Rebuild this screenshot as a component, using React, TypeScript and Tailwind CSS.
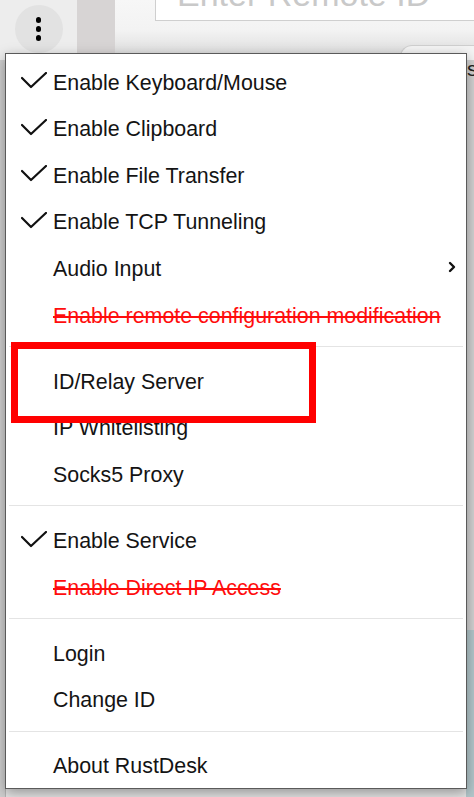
import React from 'react'

type Item = {
  label: string
  checked?: boolean
  disabled?: boolean
  submenu?: boolean
}

// menu groups, separated by dividers
const groups: Item[][] = [
  [
    { label: 'Enable Keyboard/Mouse', checked: true },
    { label: 'Enable Clipboard', checked: true },
    { label: 'Enable File Transfer', checked: true },
    { label: 'Enable TCP Tunneling', checked: true },
    { label: 'Audio Input', submenu: true },
    { label: 'Enable remote configuration modification', disabled: true },
  ],
  [{ label: 'ID/Relay Server' }, { label: 'IP Whitelisting' }, { label: 'Socks5 Proxy' }],
  [{ label: 'Enable Service', checked: true }, { label: 'Enable Direct IP Access', disabled: true }],
  [{ label: 'Login' }, { label: 'Change ID' }],
  [{ label: 'About RustDesk' }],
]

const CheckIcon = () => (
  <svg width="26" height="18" viewBox="0 0 26 18" fill="none" stroke="#111" strokeWidth="2.2" strokeLinecap="round" strokeLinejoin="round">
    <polyline points="1,6 10,15 25,1" />
  </svg>
)

const ChevronIcon = () => (
  <svg width="8" height="12" viewBox="0 0 8 12" fill="none" stroke="#111" strokeWidth="2.4" strokeLinecap="round" strokeLinejoin="round">
    <polyline points="2,2 6,6 2,10" />
  </svg>
)

function MenuRow({ item }: { item: Item }) {
  return (
    <div className="h-[46.6px] flex items-center">
      <div className="w-[47px] flex-shrink-0 flex justify-end pr-[6px] pb-[4px]">
        {item.checked && <CheckIcon />}
      </div>
      <span
        className={`flex-1 text-[21.4px] leading-none whitespace-nowrap ${
          item.disabled ? 'text-[#ff0d0d] line-through decoration-[1.5px]' : 'text-[#141414]'
        }`}
      >
        {item.label}
      </span>
      {item.submenu && (
        <div className="w-[18px] flex-shrink-0 flex justify-start pb-[6px]">
          <ChevronIcon />
        </div>
      )}
    </div>
  )
}

export default function App() {
  return (
    <div
      className="relative w-[474px] h-[797px] overflow-hidden bg-[#dcdcdc]"
      style={{ fontFamily: '"Liberation Sans", Arial, sans-serif' }}
    >
      {/* Background app: top bar */}
      <div className="flex h-[60px]">
        <div className="w-[77px] bg-[#ededed] flex justify-center pt-[5px]">
          <div className="w-[48px] h-[48px] rounded-full bg-[#e2e2e2] flex flex-col items-center justify-center gap-[3.5px]">
            <span className="w-[5.5px] h-[5.5px] rounded-full bg-black" />
            <span className="w-[5.5px] h-[5.5px] rounded-full bg-black" />
            <span className="w-[5.5px] h-[5.5px] rounded-full bg-black" />
          </div>
        </div>
        <div className="w-[38px] bg-[#d7d4d4]" />
        <div className="flex-1 bg-gradient-to-b from-[#f7f7f7] via-[#f3f3f3] to-[#d9d9d9] pl-[40px] flex flex-col">
          <div className="flex-shrink-0 mt-[-40px] h-[61px] bg-white border border-[#cfcfcf] border-r-0 flex items-end pl-[21px] overflow-hidden">
            <span className="text-[34px] leading-none text-[#c9c9c9] whitespace-nowrap pb-[9px]">Enter Remote ID</span>
          </div>
          <div className="flex-shrink-0 mt-[24px] ml-[245px] h-[30px] rounded-tl-[12px] border-t border-l border-[#cfcfcf] bg-[#f4f4f4]" />
        </div>
      </div>
      {/* Background app: rest, mostly covered */}
      <div className="flex h-[737px]">
        <div className="w-[6px] bg-[#cfcfcf] border-r border-[#b5b5b5]" />
        <div className="flex-1 bg-[#e6e6e6]" />
        <div className="w-[8px] flex flex-col">
          <div className="h-[570px] bg-[#d2d2d2] border-l border-[#9a9a9a] text-[21px] leading-none text-[#222]">
            <span className="block mt-[-2px]">s</span>
          </div>
          <div className="flex-1 bg-[#b3c7cb]" />
        </div>
      </div>

      {/* Popup menu */}
      <div className="absolute left-[5px] top-[53px] w-[462px] h-[736px] bg-white border-[1.5px] border-[#5a5a5a] shadow-[0_4px_12px_rgba(0,0,0,0.35)] pt-[6px] overflow-hidden">
        {groups.map((group, gi) => (
          <div key={gi}>
            {gi > 0 && (
              <div className="h-[19.5px] pt-[6.5px] px-[3px]">
                <div className="h-px bg-[#e4e4e4]" />
              </div>
            )}
            {group.map(item => (
              <MenuRow key={item.label} item={item} />
            ))}
          </div>
        ))}
      </div>

      {/* Annotation highlight */}
      <div className="absolute left-[11px] top-[342px] w-[305px] h-[81px] border-[7px] border-[#ff0000]" />
    </div>
  )
}
